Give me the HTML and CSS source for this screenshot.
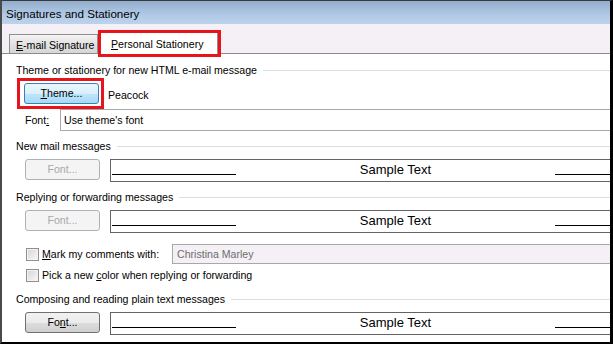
FILE: index.html
```html
<!DOCTYPE html>
<html lang="en">

<head>
   <meta charset="UTF-8">
   <title>Signatures and Stationery</title>
   <link rel="stylesheet" href="styles.css">
</head>

<body>
   <div class="window">
      <div class="titlebar">Signatures and Stationery</div>

      <!-- Tabs -->
      <div class="tabstrip">
         <div class="tab"><u>E</u>-mail Signature</div>
         <div class="callout tab-callout">
            <div class="tab tab-active"><u>P</u>ersonal Stationery</div>
         </div>
      </div>

      <div class="panel">
         <div class="group-title">Theme or stationery for new HTML e-mail message</div>

         <div class="theme-row">
            <div class="callout btn-callout">
               <div class="btn btn-blue"><u>T</u>heme...</div>
            </div>
            <span class="theme-name">Peacock</span>
         </div>

         <div class="font-row">
            <span class="label">Font<u>:</u></span>
            <div class="field">Use theme's font</div>
         </div>

         <div class="group-title gap">New mail messages</div>
         <div class="sample-row">
            <div class="btn btn-disabled">Font...</div>
            <div class="sample">
               <span class="rule"></span>
               <span class="sample-text">Sample Text</span>
               <span class="rule"></span>
            </div>
         </div>

         <div class="group-title gap">Replying or forwarding messages</div>
         <div class="sample-row">
            <div class="btn btn-disabled">Font...</div>
            <div class="sample">
               <span class="rule"></span>
               <span class="sample-text">Sample Text</span>
               <span class="rule"></span>
            </div>
         </div>

         <div class="check-row first">
            <span class="checkbox"></span>
            <span class="check-label mark-label"><u>M</u>ark my comments with:</span>
            <div class="field field-disabled">Christina Marley</div>
         </div>
         <div class="check-row second">
            <span class="checkbox"></span>
            <span class="check-label">Pick a new <u>c</u>olor when replying or forwarding</span>
         </div>

         <div class="group-title gap-check">Composing and reading plain text messages</div>
         <div class="sample-row">
            <div class="btn btn-gray">Fo<u>n</u>t...</div>
            <div class="sample">
               <span class="rule"></span>
               <span class="sample-text">Sample Text</span>
               <span class="rule"></span>
            </div>
         </div>
      </div>
   </div>
</body>

</html>
```

FILE: styles.css
```css
body {
   margin: 0;
   background: #fff;
   font-family: 'Liberation Sans', Arial, sans-serif;
   font-size: 10.6px;
   color: #000;
}

.window {
   width: 613px;
   height: 344px;
   box-sizing: border-box;
   border-top: 1px solid #3a3a3a;
   border-left: 2px solid #4a4a4a;
   border-right: 3px solid #000;
   border-bottom: 2px solid #000;
   display: flex;
   flex-direction: column;
   overflow: hidden;
}

.titlebar {
   height: 23px;
   line-height: 26px;
   padding-left: 4px;
   font-size: 11.6px;
   background: linear-gradient(#93aecd, #b0c9e5 60%, #bcd3ec);
   flex-shrink: 0;
}

/* tab strip */
.tabstrip {
   height: 29px;
   flex-shrink: 0;
   display: flex;
   align-items: flex-end;
   padding-left: 7px;
   background: #f5f0f5;
}

.tab {
   width: 89px;
   height: 19px;
   line-height: 20px;
   padding: 0 0 0 6px;
   box-sizing: border-box;
   border: 1px solid #8e8f8f;
   border-bottom: none;
   background: linear-gradient(#f4f4f4, #e2e2e2 50%, #d6d6d6);
   white-space: nowrap;
}

.callout {
   border: 3px solid #e8141b;
}

.tab-callout {
   position: relative;
   z-index: 1;
   margin-bottom: -4px;
   background: #fff;
}

.tab-active {
   height: 21px;
   line-height: 22px;
   width: 117px;
   padding: 0 0 0 10px;
   border: none;
   border-right: 1px solid #8e8f8f;
   background: #fff;
}

.panel {
   flex: 1;
   border-top: 1px solid #8c8c8c;
   padding: 9px 0 0 14px;
   background: #fff;
   overflow: hidden;
}

.group-title {
   display: flex;
   align-items: center;
   height: 14px;
   line-height: 14px;
   white-space: nowrap;
}

.group-title::after {
   content: '';
   flex: 1;
   height: 1px;
   margin-left: 6px;
   background: #d5dfe5;
}

.gap {
   margin-top: 8px;
}

.gap-check {
   margin-top: 10px;
}

.theme-row {
   display: flex;
   align-items: center;
   margin-top: 1px;
}

.btn-callout {
   margin-left: 1px;
   padding: 2px 2px 2px 4px;
}

.btn {
   width: 75px;
   height: 21px;
   box-sizing: border-box;
   line-height: 19px;
   text-align: center;
   border-radius: 3px;
   flex-shrink: 0;
}

.btn-blue {
   border: 1px solid #3c7fb1;
   background: linear-gradient(#eaf6fd, #d9f0fc 50%, #bee6fd 51%, #a7d9f5);
}

.btn-gray {
   border: 1px solid #707070;
   background: linear-gradient(#f2f2f2, #ebebeb 50%, #dddddd 51%, #cfcfcf);
}

.btn-disabled {
   border: 1px solid #adb2b5;
   background: #f4f4f4;
   color: #a8a8a8;
}

.theme-name {
   margin-left: 4px;
   margin-top: 2px;
}

.font-row {
   display: flex;
   align-items: center;
}

.label {
   margin-left: 9px;
   width: 35px;
}

.field {
   flex: 1;
   height: 22px;
   line-height: 20px;
   box-sizing: border-box;
   padding-left: 3px;
   border: 1px solid #a8a8a8;
   border-right: none;
   white-space: nowrap;
}

.field-disabled {
   height: 20px;
   line-height: 18px;
   padding-left: 4px;
   background: #f5f0f5;
   color: #6d6d6d;
}

.mark-label {
   width: 130px;
}

.sample-row {
   display: flex;
   align-items: flex-start;
   margin-top: 6px;
}

.sample-row .btn {
   margin: 0 10px 0 9px;
}

.sample {
   width: 571px;
   flex-shrink: 0;
   height: 23px;
   box-sizing: border-box;
   border: 1px solid #646464;
   display: flex;
   align-items: flex-end;
   padding: 0 1px 6px 1px;
}

.rule {
   width: 124px;
   height: 1px;
   background: #000;
   flex-shrink: 0;
}

.sample-text {
   flex: 1;
   text-align: center;
   font-size: 13px;
   line-height: 15px;
   margin-bottom: -2px;
}

.check-row {
   display: flex;
   align-items: center;
}

.check-row.first {
   margin-top: 11px;
}

.check-row.second {
   margin-top: 4px;
   height: 14px;
}

.checkbox {
   width: 13px;
   height: 13px;
   box-sizing: border-box;
   margin-left: 10px;
   margin-right: 3px;
   border: 1px solid #8f8f8f;
   box-shadow: inset 0 0 0 1px #f4f4f4;
   background: linear-gradient(135deg, #d4d4d4, #eeeeee 70%, #f6f6f6);
   flex-shrink: 0;
}

.check-label {
   white-space: nowrap;
}
```
